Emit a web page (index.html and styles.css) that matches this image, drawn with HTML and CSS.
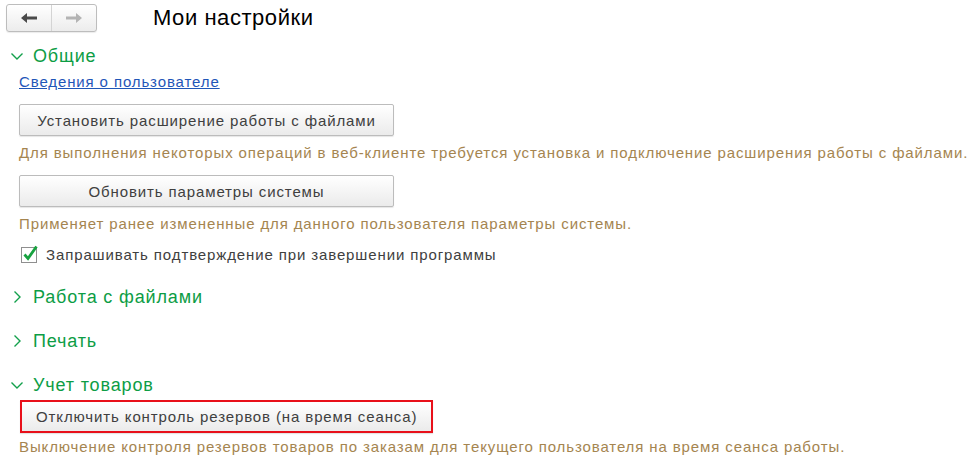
FILE: index.html
```html
<!DOCTYPE html>
<html lang="ru">
<head>
    <meta charset="UTF-8" />
    <title>Мои настройки</title>
    <link rel="stylesheet" href="styles.css">
</head>
<body>
    <div class="topbar">
        <div class="nav">
            <button class="nav-btn" title="Назад">
                <svg width="18" height="12" viewBox="0 0 18 12"><path d="M1 6 L7 1 L7 4.5 L17 4.5 L17 7.5 L7 7.5 L7 11 Z" fill="#4a4a4a"/></svg>
            </button>
            <button class="nav-btn" title="Вперед">
                <svg width="18" height="12" viewBox="0 0 18 12"><path d="M17 6 L11 1 L11 4.5 L1 4.5 L1 7.5 L11 7.5 L11 11 Z" fill="#b4b4b4"/></svg>
            </button>
        </div>
        <h1 class="title">Мои настройки</h1>
    </div>

    <div class="group group-first">
        <div class="group-head">
            <svg class="chev" width="14" height="14" viewBox="0 0 14 14"><path d="M1.5 4.5 L7 10 L12.5 4.5" fill="none" stroke="#13a04c" stroke-width="1.4"/></svg>
            <span>Общие</span>
        </div>
        <div class="group-body">
            <a href="#" class="link">Сведения о пользователе</a>
            <button class="btn">Установить расширение работы с файлами</button>
            <p class="hint">Для выполнения некоторых операций в веб-клиенте требуется установка и подключение расширения работы с файлами.</p>
            <button class="btn">Обновить параметры системы</button>
            <p class="hint">Применяет ранее измененные для данного пользователя параметры системы.</p>
            <label class="check">
                <span class="box">
                    <svg width="18" height="18" viewBox="0 0 18 18"><path d="M3.5 9.5 L7 13.5 L15.5 1.5" fill="none" stroke="#17a23f" stroke-width="2.8"/></svg>
                </span>
                Запрашивать подтверждение при завершении программы
            </label>
        </div>
    </div>

    <div class="group">
        <div class="group-head">
            <svg class="chev" width="14" height="14" viewBox="0 0 14 14"><path d="M4.5 1.5 L10 7 L4.5 12.5" fill="none" stroke="#13a04c" stroke-width="1.4"/></svg>
            <span>Работа с файлами</span>
        </div>
    </div>

    <div class="group">
        <div class="group-head">
            <svg class="chev" width="14" height="14" viewBox="0 0 14 14"><path d="M4.5 1.5 L10 7 L4.5 12.5" fill="none" stroke="#13a04c" stroke-width="1.4"/></svg>
            <span>Печать</span>
        </div>
    </div>

    <div class="group">
        <div class="group-head">
            <svg class="chev" width="14" height="14" viewBox="0 0 14 14"><path d="M1.5 4.5 L7 10 L12.5 4.5" fill="none" stroke="#13a04c" stroke-width="1.4"/></svg>
            <span>Учет товаров</span>
        </div>
        <div class="group-body">
            <button class="btn btn-marked">Отключить контроль резервов (на время сеанса)</button>
            <p class="hint hint-tight">Выключение контроля резервов товаров по заказам для текущего пользователя на время сеанса работы.</p>
        </div>
    </div>
</body>
</html>
```

FILE: styles.css
```css
body {
    margin: 0;
    padding: 4px 0 0 6px;
    font-family: "Liberation Sans", Arial, sans-serif;
    font-size: 15px;
    letter-spacing: 0.88px;
    color: #404040;
    background: #fff;
}

.topbar {
    display: flex;
    align-items: center;
    height: 28px;
}

.nav {
    display: flex;
    width: 91px;
    height: 28px;
    box-sizing: border-box;
    border: 1px solid #bdbdbd;
    border-radius: 3px;
    background: linear-gradient(#ffffff, #ececec);
    box-shadow: 0 1px 1px rgba(0, 0, 0, 0.08);
}

.nav-btn {
    flex: 1;
    border: none;
    background: none;
    padding: 0;
    display: flex;
    align-items: center;
    justify-content: center;
}

.nav-btn + .nav-btn {
    border-left: 1px solid #d4d4d4;
}

.title {
    margin: 0 0 0 56px;
    font-size: 22px;
    font-weight: normal;
    letter-spacing: 0.55px;
    color: #000;
}

.group {
    margin-top: 24px;
}

.group-first {
    margin-top: 14px;
}

.group-head {
    display: flex;
    align-items: center;
    height: 20px;
    font-size: 18px;
    letter-spacing: 0.85px;
    color: #0d9d45;
}

.chev {
    margin: 0 9px 0 4px;
}

.group-body {
    display: flex;
    flex-direction: column;
    align-items: flex-start;
    padding-left: 13px;
}

.link {
    margin-top: 7px;
    color: #1f56b8;
    text-decoration: underline;
}

.btn {
    margin-top: 14px;
    width: 375px;
    height: 32px;
    border: 1px solid #bcbcbc;
    border-radius: 2px;
    background: linear-gradient(#ffffff, #ebebeb);
    box-shadow: 0 1px 1px rgba(0, 0, 0, 0.1);
    font-family: inherit;
    font-size: 15px;
    letter-spacing: inherit;
    color: #404040;
}

.btn-marked {
    width: auto;
    height: 33px;
    margin-top: 5px;
    margin-left: 1px;
    padding: 0 14px;
    border: 2px solid #e8101a;
    border-radius: 0;
}

.hint {
    margin: 8px 0 0;
    white-space: nowrap;
    color: #a58550;
}

.hint-tight {
    margin-top: 5px;
}

.check {
    display: flex;
    align-items: center;
    margin-top: 14px;
    margin-left: 2px;
}

.box {
    position: relative;
    width: 16px;
    height: 16px;
    box-sizing: border-box;
    border: 1px solid #8f8f8f;
    margin-right: 9px;
}

.box svg {
    position: absolute;
    left: -1px;
    top: -3px;
}
```
